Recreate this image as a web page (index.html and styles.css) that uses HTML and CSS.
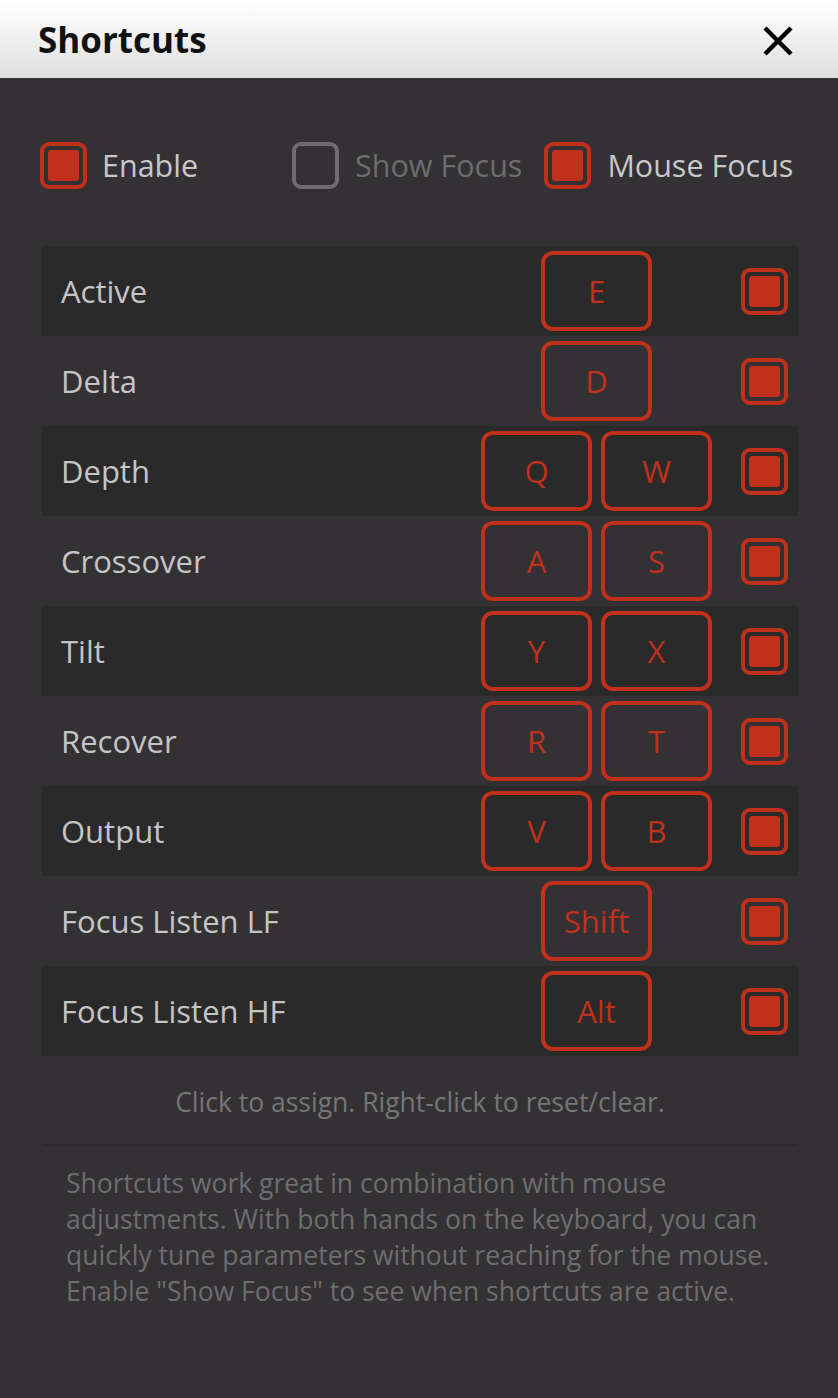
FILE: index.html
```html
<!DOCTYPE html>
<html>
<head>
<meta charset="utf-8">
<link rel="stylesheet" href="styles.css">
</head>
<body>
<div class="panel">
  <header class="titlebar">
    <h1 class="title">Shortcuts</h1>
    <svg class="close" width="32" height="32" viewBox="0 0 32 32"><path d="M3 3 L29 29 M29 3 L3 29" stroke="#000" stroke-width="4.5" fill="none"/></svg>
  </header>
  <main class="content">
    <div class="options">
      <label class="opt"><span class="cb on"></span><span class="opt-label">Enable</span></label>
      <label class="opt off"><span class="cb"></span><span class="opt-label">Show Focus</span></label>
      <label class="opt"><span class="cb on"></span><span class="opt-label">Mouse Focus</span></label>
    </div>
    <div class="table">
      <div class="row"><span class="name">Active</span><div class="keys"><span class="key">E</span></div><span class="cb on"></span></div>
      <div class="row"><span class="name">Delta</span><div class="keys"><span class="key">D</span></div><span class="cb on"></span></div>
      <div class="row"><span class="name">Depth</span><div class="keys"><span class="key">Q</span><span class="key">W</span></div><span class="cb on"></span></div>
      <div class="row"><span class="name">Crossover</span><div class="keys"><span class="key">A</span><span class="key">S</span></div><span class="cb on"></span></div>
      <div class="row"><span class="name">Tilt</span><div class="keys"><span class="key">Y</span><span class="key">X</span></div><span class="cb on"></span></div>
      <div class="row"><span class="name">Recover</span><div class="keys"><span class="key">R</span><span class="key">T</span></div><span class="cb on"></span></div>
      <div class="row"><span class="name">Output</span><div class="keys"><span class="key">V</span><span class="key">B</span></div><span class="cb on"></span></div>
      <div class="row"><span class="name">Focus Listen LF</span><div class="keys"><span class="key">Shift</span></div><span class="cb on"></span></div>
      <div class="row"><span class="name">Focus Listen HF</span><div class="keys"><span class="key">Alt</span></div><span class="cb on"></span></div>
    </div>
    <p class="hint">Click to assign. Right-click to reset/clear.</p>
    <p class="desc">Shortcuts work great in combination with mouse adjustments. With both hands on the keyboard, you can quickly tune parameters without reaching for the mouse. Enable "Show Focus" to see when shortcuts are active.</p>
  </main>
</div>
</body>
</html>
```
FILE: styles.css
```css
* { box-sizing: border-box; }
html, body { margin: 0; padding: 0; }
body {
  width: 838px;
  height: 1398px;
  background: #333134;
  font-family: "Open Sans", "DejaVu Sans", sans-serif;
  overflow: hidden;
}
.panel { display: flex; flex-direction: column; height: 100%; }
.titlebar {
  height: 78px;
  display: flex;
  align-items: center;
  justify-content: space-between;
  padding: 4px 44px 0 38px;
  background: linear-gradient(#ffffff 0%, #f8f8f8 25%, #dedede 100%);
}
.title {
  margin: 0;
  font-size: 35px;
  font-weight: 700;
  color: #111;
  line-height: 1;
  padding-bottom: 4px;
}
.close { display: block; }
.content { padding: 0 40px 0 42px; }
.options {
  display: flex;
  align-items: center;
  height: 46px;
  margin: 64px 0 58px -2px;
}
.opt { display: flex; align-items: center; cursor: pointer; }
.opt:nth-child(2) { margin-left: 94px; }
.opt:nth-child(3) { margin-left: 22px; }
.opt-label { font-size: 30.5px; color: #c9c7c9; margin-left: 16px; line-height: 1; }
.opt:first-child .opt-label { margin-left: 15px; }
.opt.off .opt-label { color: #6e6c6e; }
.cb {
  width: 47px;
  height: 47px;
  border: 4px solid #6e6c6e;
  border-radius: 9px;
  padding: 4px;
  display: inline-block;
  flex: none;
}
.cb.on { border-color: #c0301a; }
.cb.on::after {
  content: "";
  display: block;
  width: 100%;
  height: 100%;
  background: #c0301a;
  border-radius: 3px;
}
.table { display: flex; flex-direction: column; }
.row {
  height: 90px;
  display: flex;
  align-items: center;
  padding: 0 10px 0 19px;
}
.row:nth-child(odd) { background: #2a2a2a; }
.name { flex: 1; font-size: 31px; color: #c6c4c6; }
.keys {
  display: flex;
  justify-content: center;
  gap: 9px;
  width: 231px;
  margin-right: 29px;
}
.key {
  width: 111px;
  height: 80px;
  border: 4px solid #c0301a;
  border-radius: 12px;
  display: flex;
  align-items: center;
  justify-content: center;
  color: #c0301a;
  font-size: 31px;
}
.hint {
  margin: 29px 0 0;
  text-align: center;
  font-size: 26.5px;
  color: #777577;
  line-height: 34px;
  padding-bottom: 25px;
  border-bottom: 2px solid #2d2b2e;
}
.desc {
  margin: 19px 0 0;
  padding: 0 24px;
  font-size: 26.5px;
  line-height: 36px;
  color: #6f6d6f;
}
```
